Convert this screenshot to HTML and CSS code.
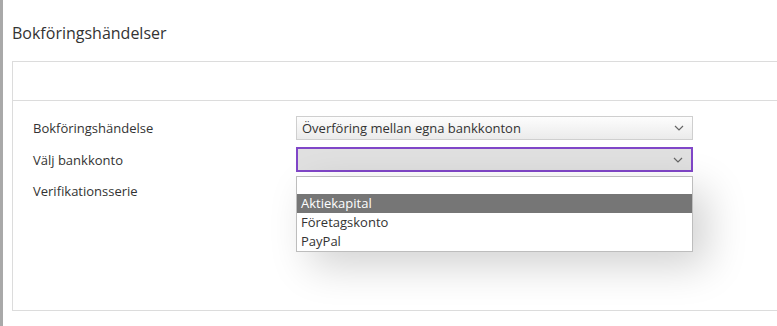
FILE: index.html
```html
<!DOCTYPE html>
<html>
<head>
    <meta charset="UTF-8">
    <meta name="viewport" content="width=device-width, initial-scale=1.0">
    <title>Bokföringshändelser</title>
    <link rel="stylesheet" href="styles.css">
</head>
<body>
    <div class="page">
        <h2 class="page-title">Bokföringshändelser</h2>
        <div class="panel">
            <div class="panel-head"></div>
            <div class="panel-body">
                <div class="form-row">
                    <label>Bokföringshändelse</label>
                    <div class="select">
                        <span>Överföring mellan egna bankkonton</span>
                        <svg class="chevron" width="10" height="6" viewBox="0 0 10 6"><path d="M1 1l4 4 4-4" fill="none" stroke="#666" stroke-width="1.2"/></svg>
                    </div>
                </div>
                <div class="form-row">
                    <label>Välj bankkonto</label>
                    <div class="select-wrap">
                        <div class="select focused">
                            <span></span>
                            <svg class="chevron" width="10" height="6" viewBox="0 0 10 6"><path d="M1 1l4 4 4-4" fill="none" stroke="#666" stroke-width="1.2"/></svg>
                        </div>
                        <ul class="dropdown">
                            <li class="empty"></li>
                            <li class="active">Aktiekapital</li>
                            <li>Företagskonto</li>
                            <li>PayPal</li>
                        </ul>
                    </div>
                </div>
                <div class="form-row">
                    <label>Verifikationsserie</label>
                    <div class="select">
                        <span></span>
                    </div>
                </div>
            </div>
        </div>
    </div>
</body>
</html>
```

FILE: styles.css
```css
body {
    margin: 0;
    font-family: 'Open Sans', sans-serif;
    color: #333;
    background-color: #fff;
    overflow: hidden;
}
.page {
    border-left: 3px solid #a9a9a9;
    height: 326px;
    padding-left: 9px;
    box-sizing: border-box;
}
.page-title {
    margin: 0;
    padding-top: 22px;
    height: 61px;
    box-sizing: border-box;
    font-size: 16px;
    font-weight: normal;
    line-height: 22px;
}
.panel {
    border: 1px solid #dcdcdc;
    margin-right: -20px;
}
.panel-head {
    height: 38px;
    border-bottom: 1px solid #dcdcdc;
}
.panel-body {
    padding: 15px 20px 0;
    height: 194px;
}
.form-row {
    display: grid;
    grid-template-columns: 263px 397px;
    align-items: center;
    font-size: 13px;
    margin-bottom: 7px;
}
.form-row label {
    line-height: 24px;
}
.select {
    display: flex;
    align-items: center;
    justify-content: space-between;
    height: 24px;
    padding: 0 8px 0 5px;
    border: 1px solid #cfcfcf;
    background: linear-gradient(#fdfdfd, #ebebeb);
    box-sizing: border-box;
}
.select.focused {
    height: 25px;
    border: 2px solid #8046c8;
    padding-left: 4px;
    background: #e0e0e0;
}
.select-wrap {
    position: relative;
}
.dropdown {
    position: absolute;
    top: 29px;
    left: 0;
    right: 0;
    margin: 0;
    padding: 0;
    list-style: none;
    background: #fff;
    border: 1px solid #bdbdbd;
    box-shadow: 14px 14px 40px rgba(0, 0, 0, 0.18);
    z-index: 2;
}
.dropdown li {
    height: 19px;
    line-height: 19px;
    padding-left: 4px;
}
.dropdown li.empty {
    height: 17px;
}
.dropdown li.active {
    background: #767676;
    color: #fff;
}
```
